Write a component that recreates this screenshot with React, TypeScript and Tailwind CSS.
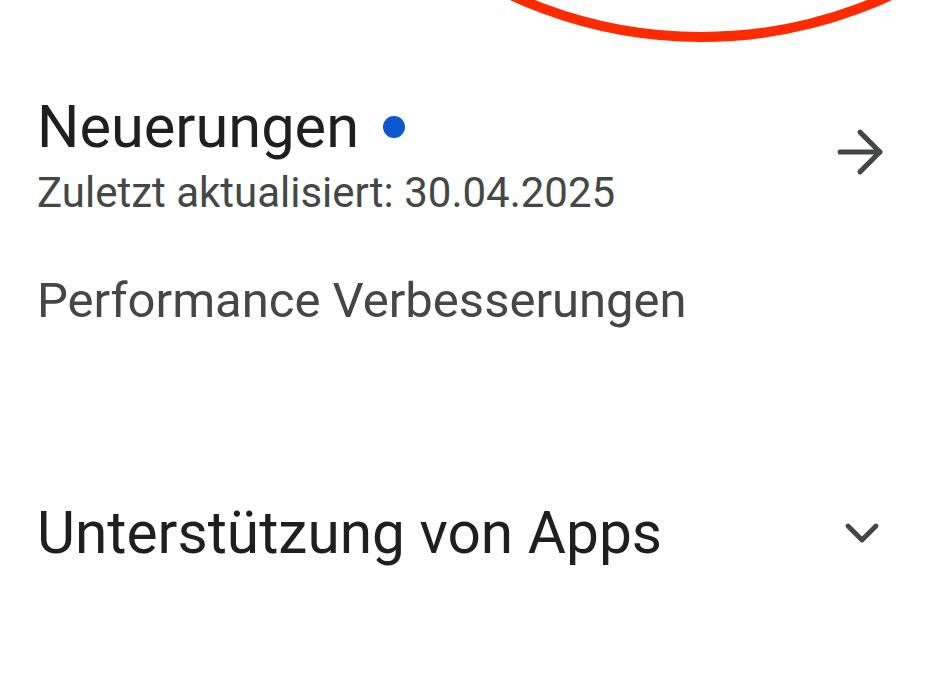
import { ArrowRight, ChevronDown } from "lucide-react";

const App = () => {
  return (
    <div
      className="relative w-[945px] h-[675px] bg-white overflow-hidden"
      style={{ fontFamily: "Roboto, 'Noto Sans', sans-serif" }}
    >
      {/* red annotation circle */}
      <svg className="absolute left-0 top-0" width="945" height="60" viewBox="0 0 945 60">
        <ellipse cx="701" cy="-363" rx="426" ry="400" fill="none" stroke="#ff2a00" strokeWidth="10" />
      </svg>

      <div className="pl-[37px] pr-[51px] pt-[94px]">
        {/* NEUERUNGEN */}
        <div className="flex items-center justify-between">
          <div>
            <div className="flex items-center gap-[24px]">
              <h2 className="text-[59.5px] leading-[66px] text-[#1f1f1f]">Neuerungen</h2>
              <span className="w-[22px] h-[22px] rounded-full bg-[#0b57d0]" />
            </div>
            <p className="text-[42px] leading-[50px] text-[#444746] mt-[8px]">
              Zuletzt aktualisiert: 30.04.2025
            </p>
          </div>
          <ArrowRight className="w-[68px] h-[68px] text-[#444746] -mt-[8px]" strokeWidth={1.8} />
        </div>

        <p className="text-[49px] leading-[56px] text-[#444746] mt-[55px]">Performance Verbesserungen</p>

        {/* APPS */}
        <div className="flex items-center justify-between mt-[171px]">
          <h2 className="text-[58.6px] leading-[66px] text-[#1f1f1f]">Unterstützung von Apps</h2>
          <ChevronDown className="w-[56px] h-[56px] text-[#444746] mr-[4px]" strokeWidth={2.1} />
        </div>
      </div>
    </div>
  );
};

export default App;
